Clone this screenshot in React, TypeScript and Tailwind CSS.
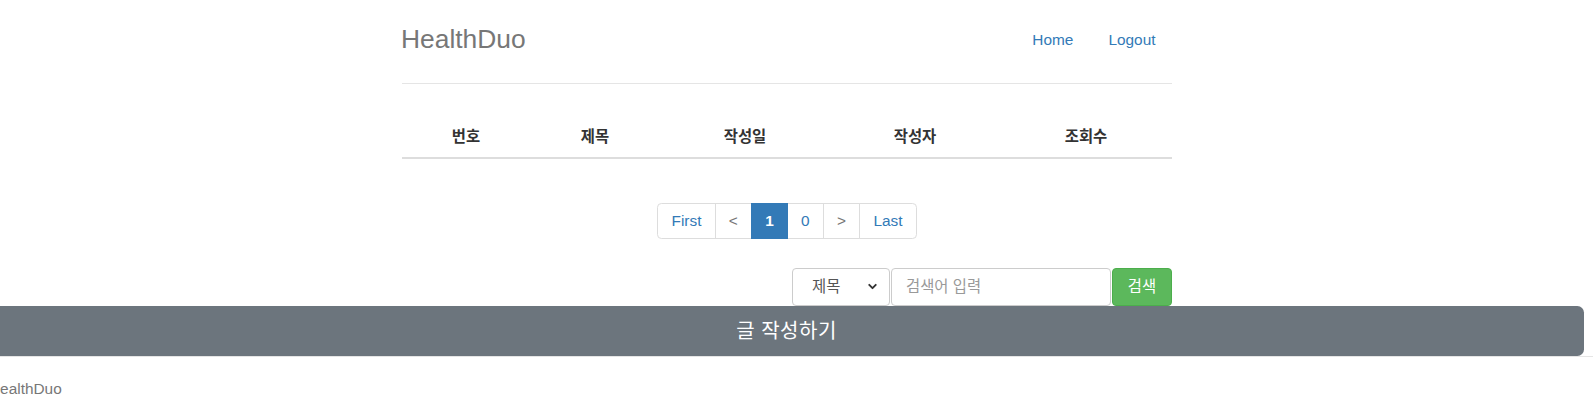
import { ChevronDown } from "lucide-react"

const font = "font-['Liberation_Sans','Noto_Sans_CJK_KR',sans-serif]"

const columns = ["번호", "제목", "작성일", "작성자", "조회수"]

const pages = [
  { label: "First", kind: "link" },
  { label: "<", kind: "muted" },
  { label: "1", kind: "active" },
  { label: "0", kind: "link" },
  { label: ">", kind: "muted" },
  { label: "Last", kind: "link" },
]

export default function App() {
  return (
    <div className={`${font} w-full h-[416px] overflow-hidden bg-white text-[15.4px] text-[#333]`}>
      <div className="ml-[402px] w-[770px]">
        {/* header */}
        <header className="flex justify-between items-start h-[84px] border-b border-[#e5e5e5]">
          <h3 className="pt-[25px] -ml-[1px] text-[26.4px] leading-[29px] text-[#777]">HealthDuo</h3>
          <nav className="flex gap-[2px] pt-[18px]">
            <a className="px-[16.5px] py-[11px] leading-[22px] text-[#337ab7]" href="#">
              Home
            </a>
            <a className="px-[16.5px] py-[11px] leading-[22px] text-[#337ab7]" href="#">
              Logout
            </a>
          </nav>
        </header>

        {/* board table */}
        <div className="mt-[33px] grid grid-cols-[128px_130px_170px_170px_172px] border-b-2 border-[#ddd]">
          {columns.map((c) => (
            <div key={c} className="py-[8.8px] leading-[22px] text-center font-bold">
              {c}
            </div>
          ))}
        </div>

        {/* pagination */}
        <div className="mt-[44px] flex justify-center">
          <ul className="flex">
            {pages.map((p, i) => (
              <li
                key={p.label}
                className={
                  "h-[36px] px-[13.2px] leading-[34px] border " +
                  (i > 0 ? "-ml-[1px] " : "") +
                  (i === 0 ? "rounded-l-[4.4px] " : "") +
                  (i === pages.length - 1 ? "rounded-r-[4.4px] " : "") +
                  (p.kind === "active"
                    ? "bg-[#337ab7] border-[#337ab7] text-white font-bold relative"
                    : p.kind === "muted"
                    ? "border-[#ddd] text-[#777] bg-white"
                    : "border-[#ddd] text-[#337ab7] bg-white")
                }
              >
                {p.label}
              </li>
            ))}
          </ul>
        </div>

        {/* search */}
        <div className="mt-[29px] flex justify-end gap-[1px] h-[38px]">
          <div className="w-[98px] flex items-center justify-between pl-[19px] pr-[10px] border border-[#ccc] rounded-[4px] text-[#555]">
            <span>제목</span>
            <ChevronDown className="w-[13px] h-[13px] text-[#333]" strokeWidth={3.5} />
          </div>
          <div className="w-[220px] flex items-center px-[14px] border border-[#ccc] rounded-[4px] text-[#999]">
            검색어 입력
          </div>
          <button className="w-[60px] border border-[#4cae4c] bg-[#5cb85c] text-white rounded-[4px]">
            검색
          </button>
        </div>
      </div>

      {/* write button + footer */}
      <div className="-ml-[11px] w-[1620px]">
        <button className="w-[1595px] h-[50px] bg-[#6c757d] text-white text-[20px] tracking-[0.5px] rounded-[6.6px]">
          글 작성하기
        </button>
        <footer className="border-t border-[#e5e5e5] pt-[21px] leading-[22px] text-[#777]">
          HealthDuo
        </footer>
      </div>
    </div>
  )
}
